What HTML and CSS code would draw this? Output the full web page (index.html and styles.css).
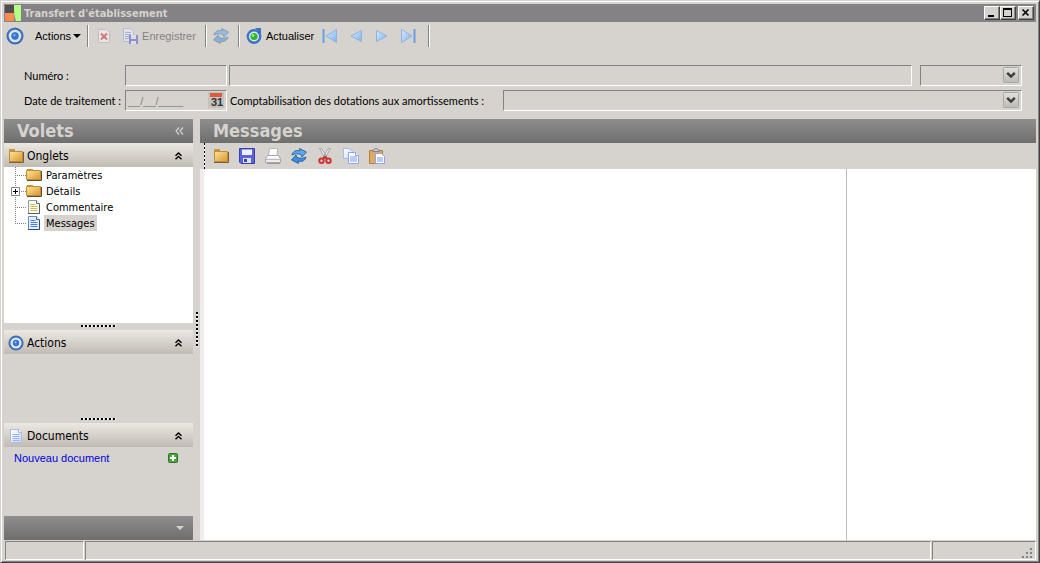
FILE: index.html
```html
<!DOCTYPE html>
<html lang="fr">
<head>
    <meta charset="UTF-8">
    <meta name="viewport" content="width=device-width, initial-scale=1.0">
    <title>Transfert d'établissement</title>
    <link rel="stylesheet" href="styles.css">
</head>
<body>

<!-- Shared icons -->
<svg class="sprite" width="0" height="0" aria-hidden="true">
    <defs>
        <linearGradient id="gold" x1="0" y1="0" x2="1" y2="1">
            <stop offset="0" stop-color="#fde69a"/>
            <stop offset="1" stop-color="#d9952f"/>
        </linearGradient>
        <linearGradient id="sky" x1="0" y1="0" x2="1" y2="1">
            <stop offset="0" stop-color="#d8eaff"/>
            <stop offset="1" stop-color="#7fb2ee"/>
        </linearGradient>
        <linearGradient id="paper" x1="0" y1="0" x2="1" y2="1">
            <stop offset="0" stop-color="#ffffff"/>
            <stop offset="1" stop-color="#c9d8fa"/>
        </linearGradient>
        <linearGradient id="knob" x1="0" y1="0" x2="0" y2="1">
            <stop offset="0" stop-color="#e2e1de"/>
            <stop offset="1" stop-color="#bcbab6"/>
        </linearGradient>
        <symbol id="target" viewBox="0 0 16 16">
            <circle cx="8" cy="8" r="6.600" fill="#d9e4f4" stroke="#3f6fb8" stroke-width="2"/>
            <circle cx="8" cy="8" r="2.800" fill="#2f7be0" stroke="#3a6cc0"/>
            <circle cx="7.400" cy="7.200" r="1" fill="#8cc4ff"/>
        </symbol>
        <symbol id="folder" viewBox="0 0 16 16">
            <path d="M1 4V1h6v3z" fill="#c8963c"/>
            <path d="M1.500 3.500h13v10h-13z" fill="url(#gold)" stroke="#c08c3a"/>
            <path d="M1 14.500h14.500V4" fill="none" stroke="#76603a"/>
        </symbol>
        <symbol id="tree-folder" viewBox="0 0 16 16">
            <path d="M1 4V2h6v2z" fill="#c8963c"/>
            <path d="M.5 3.500h14v9H.5z" fill="url(#gold)" stroke="#c08c3a"/>
            <path d="M1 13.500h14.500V4" fill="none" stroke="#5c4a28"/>
        </symbol>
        <symbol id="page" viewBox="0 0 16 16">
            <path d="M2.500 1.500h8l3 3v10h-11z" fill="url(#paper)" stroke="#a8bce8"/>
            <path d="M10.500 1.500v3h3" fill="#fff" stroke="#9fb4e4"/>
            <path d="M4.500 6.500h7M4.500 8.500h7M4.500 10.500h7M4.500 12.500h7" stroke="#9ab4f2"/>
        </symbol>
        <symbol id="sync" viewBox="0 0 16 16">
            <path d="M1 7C1.500 3.500 5 1.800 9 2.800L8.500.5 15.500 4 11 9 10 6.500C7 5.500 4 5.500 1 7z" fill="#58a8ec" stroke="#1d5596" stroke-width=".8"/>
            <path d="M15 9c-.5 3.500-4 5.200-8 4.200l.5 2.300L.5 12 5 7l1 2.500c3 1 6 1 9-.5z" fill="#3f90dc" stroke="#1d5596" stroke-width=".8"/>
        </symbol>
        <symbol id="collapse" viewBox="0 0 8 8">
            <path d="M1 3.800L4 1l3 2.800M1 7.300l3-2.800 3 2.800" fill="none" stroke="#000" stroke-width="1.400"/>
        </symbol>
        <symbol id="drop" viewBox="0 0 16 16">
            <rect x=".5" y=".5" width="15" height="15" rx="1" fill="url(#knob)" stroke="#aaa8a4"/>
            <path d="M4.200 5.800L8 9.600l3.800-3.800" fill="none" stroke="#3c3c3c" stroke-width="2.400"/>
        </symbol>
    </defs>
</svg>

<div class="window">
    <header class="titlebar">
        <svg class="logo" viewBox="0 0 16 16" aria-hidden="true">
            <path d="M0 0h9v8H0z" fill="#4e4e4c"/>
            <path d="M0 8h9v8H0z" fill="#ff8a50"/>
            <path d="M9 0h7v16h-5C9 11 9 6 9 0z" fill="#b4ff84"/>
        </svg>
        <h1 class="title">Transfert d'établissement</h1>
        <button class="caption-button" type="button" aria-label="Réduire">
            <svg viewBox="0 0 12 10"><path d="M2 7h6v2H2z"/></svg>
        </button>
        <button class="caption-button" type="button" aria-label="Agrandir">
            <svg viewBox="0 0 12 10"><path d="M1 0h9v9H1zM2 2v6h7V2z" fill-rule="evenodd"/></svg>
        </button>
        <button class="caption-button close" type="button" aria-label="Fermer">
            <svg viewBox="0 0 12 10"><path d="M2.500 1.500l6 6M8.500 1.500l-6 6" stroke="#000" stroke-width="1.600"/></svg>
        </button>
    </header>

    <nav class="toolbar" aria-label="Barre d'outils">
        <button class="tool" type="button" aria-label="Processus"><svg class="icon large"><use href="#target"/></svg></button>
        <button class="tool menu" type="button">Actions
            <svg class="caret" viewBox="0 0 8 4"><path d="M0 0h8L4 4z"/></svg>
        </button>
        <span class="separator"></span>
        <button class="tool" type="button" disabled aria-label="Supprimer">
            <svg class="icon" viewBox="0 0 16 16">
                <path d="M2.500 1.500h8l3 3v10h-11z" fill="#fbf8f8" stroke="#b0aec0"/>
                <path d="M5 5.500l6 6M11 5.500l-6 6" stroke="#d81c30" stroke-width="2"/>
            </svg>
        </button>
        <button class="tool" type="button" disabled>
            <svg class="icon" viewBox="0 0 16 16">
                <path d="M1.500.5h7l3 3v10h-10z" fill="#eef2ff" stroke="#8fa2e0"/>
                <path d="M3 4.500h6M3 6.500h6M3 8.500h5M3 10.500h4" stroke="#7b94e4"/>
                <path d="M7 7h9v9H7z" fill="#4a50c8"/>
                <path d="M9 7h5v4H9zM9 13h5v3H9z" fill="#e6e8ff"/>
            </svg>
            <span>Enregistrer</span>
        </button>
        <span class="separator wide"></span>
        <button class="tool" type="button" disabled aria-label="Synchroniser"><svg class="icon"><use href="#sync"/></svg></button>
        <span class="separator wide"></span>
        <button class="tool" type="button">
            <svg class="icon" viewBox="0 0 16 16">
                <circle cx="8" cy="8.500" r="6.200" fill="#dfe8f6" stroke="#3f72c0" stroke-width="2.400"/>
                <path d="M9 0h6v6z" fill="#3f72c0"/>
                <circle cx="8" cy="8.500" r="3.600" fill="#2fb52f"/>
                <circle cx="7" cy="7.500" r="1.400" fill="#8af07a"/>
            </svg>
            <span>Actualiser</span>
        </button>
        <div class="pager">
            <button class="tool" type="button" aria-label="Premier"><svg class="icon" viewBox="0 0 16 16"><path d="M14.500 1.500v13L4 8z" fill="url(#sky)" stroke="#8fb2de"/><path d="M1.500 1v14" stroke="#6d9edb" stroke-width="2"/></svg></button>
            <button class="tool" type="button" aria-label="Précédent"><svg class="icon" viewBox="0 0 16 16"><path d="M13.500 2.500v11L3 8z" fill="url(#sky)" stroke="#8fb2de"/></svg></button>
            <button class="tool" type="button" aria-label="Suivant"><svg class="icon" viewBox="0 0 16 16"><path d="M2.500 2.500v11L13 8z" fill="url(#sky)" stroke="#8fb2de"/></svg></button>
            <button class="tool" type="button" aria-label="Dernier"><svg class="icon" viewBox="0 0 16 16"><path d="M1.500 1.500v13L12 8z" fill="url(#sky)" stroke="#8fb2de"/><path d="M14.500 1v14" stroke="#6d9edb" stroke-width="2"/></svg></button>
        </div>
        <span class="separator"></span>
    </nav>

    <form class="criteria">
        <div class="row">
            <label class="caption" for="numero">Numéro :</label>
            <input class="field short" id="numero" type="text">
            <input class="field wide" type="text" aria-label="Libellé">
            <span class="combo small">
                <select class="field" aria-label="État"><option></option></select>
                <svg class="arrow"><use href="#drop"/></svg>
            </span>
        </div>
        <div class="row">
            <label class="caption" for="dateTraitement">Date de traitement :</label>
            <span class="date">
                <input class="field short" id="dateTraitement" type="text" value="__/__/____">
                <button class="calendar" type="button" aria-label="Calendrier">
                    <svg viewBox="0 0 16 16">
                        <rect width="16" height="16" rx="1" fill="#c4c2c0"/>
                        <path d="M2 1h12v4H2z" fill="#e2593c"/>
                        <text x="9" y="14" text-anchor="middle" fill="#333">31</text>
                    </svg>
                </button>
            </span>
            <label class="inline-label" for="comptabilisation">Comptabilisation des dotations aux amortissements :</label>
            <span class="combo">
                <select class="field" id="comptabilisation"><option></option></select>
                <svg class="arrow"><use href="#drop"/></svg>
            </span>
        </div>
    </form>

    <div class="workspace">
        <aside class="sidebar">
            <div class="pane-title">
                <h2>Volets</h2>
                <button class="plain" type="button" aria-label="Replier les volets">
                    <svg class="chevrons" viewBox="0 0 9 8"><path d="M4 .5L1 4l3 3.500M8 .5L5 4l3 3.500" fill="none" stroke="#d6d3ce" stroke-width="1.200"/></svg>
                </button>
            </div>

            <section class="panel tabs">
                <div class="panel-title">
                    <svg class="icon"><use href="#folder"/></svg>
                    <h3>Onglets</h3>
                    <button class="plain" type="button" aria-label="Replier Onglets"><svg class="chevrons"><use href="#collapse"/></svg></button>
                </div>
                <ul class="tree">
                    <li><span class="branch"></span><svg class="icon"><use href="#tree-folder"/></svg><a href="#">Paramètres</a></li>
                    <li>
                        <span class="branch"><button class="expander" type="button" aria-label="Développer Détails"><svg viewBox="0 0 9 9"><path d="M.5.5h8v8h-8z" fill="#fff" stroke="#848284"/><path d="M2 4.500h5M4.500 2v5" stroke="#000"/></svg></button></span>
                        <svg class="icon"><use href="#tree-folder"/></svg><a href="#">Détails</a>
                    </li>
                    <li>
                        <span class="branch"></span>
                        <svg class="icon" viewBox="0 0 16 16"><path d="M2.500 1.500h8l3 3v10h-11z" fill="#fffce0" stroke="#8c9cac"/><path d="M10.500 1.500v3h3" fill="#fff" stroke="#54708c"/><path d="M4.500 5.500h5M4.500 7.500h7M4.500 9.500h7M4.500 11.500h7" stroke="#c4bc7c"/><path d="M2 14.500h11.500V5" fill="none" stroke="#4c5c6c"/></svg>
                        <a href="#">Commentaire</a>
                    </li>
                    <li class="last">
                        <span class="branch"></span>
                        <svg class="icon" viewBox="0 0 16 16"><path d="M2.500 1.500h8l3 3v10h-11z" fill="#e8f0ff" stroke="#6c8cc4"/><path d="M10.500 1.500v3h3" fill="#fff" stroke="#3c64a4"/><path d="M4.500 5.500h5M4.500 7.500h7M4.500 9.500h7M4.500 11.500h7" stroke="#4c7cdc"/><path d="M2 14.500h11.500V5" fill="none" stroke="#2c4c84"/></svg>
                        <a class="selected" href="#" aria-current="page">Messages</a>
                    </li>
                </ul>
            </section>
            <div class="grip"></div>

            <section class="panel actions">
                <div class="panel-title">
                    <svg class="icon"><use href="#target"/></svg>
                    <h3>Actions</h3>
                    <button class="plain" type="button" aria-label="Replier Actions"><svg class="chevrons"><use href="#collapse"/></svg></button>
                </div>
            </section>
            <div class="grip"></div>

            <section class="panel documents">
                <div class="panel-title">
                    <svg class="icon"><use href="#page"/></svg>
                    <h3>Documents</h3>
                    <button class="plain" type="button" aria-label="Replier Documents"><svg class="chevrons"><use href="#collapse"/></svg></button>
                </div>
                <div class="new-document">
                    <a href="#">Nouveau document</a>
                    <button class="plain" type="button" aria-label="Ajouter">
                        <svg class="add" viewBox="0 0 10 10"><rect x=".5" y=".5" width="9" height="9" rx="1" fill="#4ca43e" stroke="#2c7622"/><path d="M5 2v6M2 5h6" stroke="#fff" stroke-width="2"/></svg>
                    </button>
                </div>
            </section>

            <div class="pane-title footer">
                <button class="plain" type="button" aria-label="Options">
                    <svg class="caret" viewBox="0 0 8 4"><path d="M0 0h8L4 4z" fill="#d6d3ce"/></svg>
                </button>
            </div>
        </aside>

        <div class="splitter"></div>

        <main class="content">
            <div class="pane-title">
                <h2>Messages</h2>
            </div>
            <div class="content-tools">
                <button class="tool" type="button" aria-label="Ouvrir"><svg class="icon"><use href="#folder"/></svg></button>
                <button class="tool" type="button" aria-label="Enregistrer">
                    <svg class="icon" viewBox="0 0 16 16"><path d="M.5.5h15v15H2L.5 14z" fill="#5c62dc" stroke="#3a3eac"/><path d="M3 1h10v6H3z" fill="#eef0ff"/><path d="M3 1h10v1H3z" fill="#9fa5f4"/><path d="M4 10h8v5H4z" fill="#dfe2f6"/><path d="M5 11h3v3H5z" fill="#3a3fb4"/></svg>
                </button>
                <button class="tool" type="button" aria-label="Imprimer">
                    <svg class="icon" viewBox="0 0 16 16"><path d="M4.500.5h8L12 8H3.500z" fill="#fff" stroke="#b8b8b8"/><path d="M2.500 7.500h11l2 3v4H.5v-4z" fill="#ececee" stroke="#a8a8ac"/><path d="M3 8h10v2H3z" fill="#fff"/><path d="M1 11.500h14" stroke="#bcbcc0"/><path d="M2 15.500h13" stroke="#98989c"/></svg>
                </button>
                <button class="tool" type="button" aria-label="Actualiser"><svg class="icon"><use href="#sync"/></svg></button>
                <button class="tool" type="button" aria-label="Couper">
                    <svg class="icon" viewBox="0 0 16 16"><path d="M2.500 0h1.500l5.500 8L8 10.500zM13.500 0H12L6.500 8 8 10.500z" fill="#fff" stroke="#8c8c94" stroke-width=".8"/><path d="M8 8.500l-2.500 3M8 8.500l2.500 3" stroke="#c83030" stroke-width="2"/><circle cx="4.500" cy="12.800" r="2.200" fill="#ead6d4" stroke="#cc3434" stroke-width="2"/><circle cx="11.500" cy="12.800" r="2.200" fill="#ead6d4" stroke="#cc3434" stroke-width="2"/></svg>
                </button>
                <button class="tool" type="button" aria-label="Copier">
                    <svg class="icon" viewBox="0 0 16 16"><path d="M.5.5h6l3 3v7h-9z" fill="url(#paper)" stroke="#a4b8ec"/><path d="M5.500 4.500h7l3 3v8h-10z" fill="#fff" stroke="#8ca6e6"/><path d="M7 8h7v6H7z" fill="#b8ccfa"/><path d="M12.500 4.500v3h3" fill="#fff" stroke="#8ca6e6"/></svg>
                </button>
                <button class="tool" type="button" aria-label="Coller">
                    <svg class="icon" viewBox="0 0 16 16"><path d="M.5 2.500h13v13H.5z" fill="#e0a862" stroke="#b08040"/><path d="M3.500 3.500V2H5L6 .5h2L9 2h1.500v1.500z" fill="#c8c8c8" stroke="#888"/><path d="M6.500 5.500h6l3 3v7h-9z" fill="#fff" stroke="#8ca6e6"/><path d="M8 9h6v5H8z" fill="#b8ccfa"/></svg>
                </button>
            </div>
            <div class="messages">
                <div class="message-list"></div>
                <div class="message-side"></div>
            </div>
        </main>
    </div>

    <footer class="statusbar">
        <span class="cell first"></span>
        <span class="cell middle"></span>
        <span class="cell end">
            <svg class="resize" viewBox="0 0 11 11"><path d="M8 0h2v2H8zM4 4h2v2H4zM8 4h2v2H8zM0 8h2v2H0zM4 8h2v2H4zM8 8h2v2H8z" fill="#848284"/></svg>
        </span>
    </footer>
</div>

</body>
</html>
```
FILE: styles.css
```css
* {
    box-sizing: border-box;
}

body {
    margin: 0;
    background-color: #d6d3ce;
    color: #000;
    font-family: "Liberation Sans", Arial, sans-serif;
    font-size: 11px;
}

h1, h2, h3, ul {
    margin: 0;
    padding: 0;
}

button, input, select {
    font: inherit;
    color: inherit;
}

svg {
    display: block;
    flex: none;
}

.sprite {
    height: 0;
}

.window {
    display: flex;
    flex-direction: column;
    min-height: 100vh;
    padding: 3px 3px 2px;
    border: 1px solid #d6d3ce;
    border-right-color: #424142;
    border-bottom-color: #424142;
    box-shadow: inset 1px 1px #fff, inset -1px -1px #848284;
}

/* Title bar */
.titlebar {
    display: flex;
    align-items: center;
    height: 18px;
    padding-right: 2px;
    background-color: #848284;
}

.logo {
    width: 16px;
    height: 16px;
    margin: 0 3px 0 1px;
}

.title {
    flex: 1;
    color: #d6d3ce;
    font-family: "DejaVu Sans Condensed", "DejaVu Sans", sans-serif;
    font-size: 11px;
    font-weight: bold;
}

.caption-button {
    width: 16px;
    height: 14px;
    padding: 1px;
    border: 1px solid #fff;
    border-right-color: #424142;
    border-bottom-color: #424142;
    background-color: #d6d3ce;
    box-shadow: inset -1px -1px #848284;
}

.caption-button svg {
    width: 12px;
    height: 10px;
}

.caption-button.close {
    margin-left: 2px;
}

/* Toolbars */
.toolbar {
    display: flex;
    align-items: center;
    height: 28px;
    padding-left: 2px;
}

.tool {
    display: flex;
    align-items: center;
    gap: 4px;
    padding: 0;
    border: none;
    background: none;
    cursor: pointer;
}

.tool:disabled {
    color: #848284;
    cursor: default;
}

.tool:disabled svg {
    opacity: 0.5;
}

.tool.menu {
    margin-left: 11px;
    gap: 2px;
}

.icon {
    width: 16px;
    height: 16px;
}

.icon.large {
    width: 18px;
    height: 18px;
}

.caret {
    width: 8px;
    height: 4px;
}

.separator {
    width: 2px;
    height: 22px;
    margin: 0 7px 0 6px;
    border-left: 1px solid #848284;
    border-right: 1px solid #fff;
}

.separator.wide {
    margin: 0 6px 0 9px;
}

.toolbar .tool:disabled + .tool {
    margin-left: 10px;
}

.pager {
    display: flex;
    gap: 10px;
    margin: 0 6px 0 8px;
}

/* Criteria */
.criteria {
    display: flex;
    flex-direction: column;
    gap: 4px;
    padding: 15px 14px 8px 20px;
}

.row {
    display: flex;
    align-items: center;
    gap: 2px;
}

.caption,
.inline-label {
    font-family: Lato, "Liberation Sans", sans-serif;
    white-space: nowrap;
}

.caption {
    width: 99px;
}

.field {
    width: 100%;
    height: 21px;
    padding: 0 2px;
    border: 1px solid #848284;
    border-right-color: #fff;
    border-bottom-color: #fff;
    border-radius: 0;
    background-color: #d6d3ce;
    appearance: none;
}

.field.short {
    width: 102px;
    color: #848284;
}

.field.wide {
    flex: 1;
}

.combo {
    position: relative;
    flex: 1;
}

.combo.small {
    flex: none;
    width: 102px;
    margin-left: 6px;
}

.combo .field {
    display: block;
}

.arrow {
    position: absolute;
    top: 2px;
    right: 3px;
    width: 16px;
    height: 16px;
    pointer-events: none;
}

.date {
    position: relative;
}

.date .field {
    display: block;
}

.calendar {
    position: absolute;
    top: 2px;
    right: 3px;
    padding: 0;
    border: none;
    background: none;
}

.calendar svg {
    width: 16px;
    height: 16px;
    font-size: 11px;
    font-weight: bold;
}

.inline-label {
    width: 272px;
    padding-left: 1px;
}

/* Workspace */
.workspace {
    display: flex;
    flex: 1;
}

.sidebar {
    display: flex;
    flex-direction: column;
    width: 189px;
}

.pane-title {
    display: flex;
    align-items: center;
    justify-content: space-between;
    height: 24px;
    padding: 0 9px 0 13px;
    background: linear-gradient(#8e8e8e, #6e6e6e);
    color: #d6d3ce;
}

.pane-title h2 {
    font-family: "DejaVu Sans Condensed", "DejaVu Sans", sans-serif;
    font-size: 18px;
    line-height: 24px;
}

.pane-title.footer {
    justify-content: flex-end;
    margin-top: auto;
}

.plain {
    padding: 0;
    border: none;
    background: none;
    cursor: pointer;
}

.chevrons {
    width: 9px;
    height: 8px;
}

.panel-title {
    display: flex;
    align-items: center;
    gap: 3px;
    height: 24px;
    padding: 1px 10px 0 4px;
    background: linear-gradient(#ece8e2, #c0bcb4);
}

.panel-title h3 {
    flex: 1;
    font-family: "DejaVu Sans Condensed", "DejaVu Sans", sans-serif;
    font-size: 12px;
    font-weight: normal;
}

.tabs {
    display: flex;
    flex: 1;
    flex-direction: column;
}

.tree {
    flex: 1;
    background-color: #fff;
    list-style: none;
    font-family: "DejaVu Sans Condensed", "DejaVu Sans", sans-serif;
}

.tree li {
    display: flex;
    align-items: center;
    height: 16px;
}

.tree a {
    margin-left: 2px;
    padding: 1px 2px 0;
    color: #000;
    line-height: 15px;
    text-decoration: none;
}

.tree a.selected {
    background-color: #d6d3ce;
}

/* Dotted lines that join the tree items */
.branch {
    display: flex;
    align-items: center;
    align-self: stretch;
    width: 22px;
    padding-left: 7px;
    background:
        repeating-linear-gradient(#848284 0 1px, transparent 1px 2px) 11px 0 / 1px 100% no-repeat,
        repeating-linear-gradient(90deg, #848284 0 1px, transparent 1px 2px) 11px 8px / 11px 1px no-repeat;
}

.last .branch {
    background-size: 1px 8px, 11px 1px;
}

.expander {
    padding: 0;
    border: none;
    background: none;
}

.expander svg {
    width: 9px;
    height: 9px;
}

.grip {
    height: 7px;
    background: repeating-linear-gradient(90deg, #000 0 2px, #fff 2px 3px, transparent 3px 4px) center 2px / 36px 2px no-repeat;
}

.actions {
    height: 86px;
}

.documents {
    height: 93px;
}

.new-document {
    display: flex;
    align-items: center;
    justify-content: space-between;
    height: 22px;
    padding: 0 15px 0 10px;
}

.new-document a {
    color: #0000e0;
    text-decoration: none;
}

.add {
    width: 10px;
    height: 10px;
}

.splitter {
    width: 7px;
    background: repeating-linear-gradient(#000 0 2px, #fff 2px 3px, transparent 3px 4px) 3px center / 2px 36px no-repeat;
    cursor: col-resize;
}

.content {
    display: flex;
    flex: 1;
    flex-direction: column;
}

.content-tools {
    display: flex;
    align-items: center;
    gap: 10px;
    height: 26px;
    margin-left: 4px;
    padding-left: 9px;
    background: repeating-linear-gradient(#000 0 2px, #fff 2px 4px) 0 0 / 1px 100% no-repeat;
}

.messages {
    display: flex;
    flex: 1;
    border-left: 4px solid #efebef;
    background-color: #fff;
}

.message-list {
    flex: 1;
    border-right: 1px solid #bdbabd;
}

.message-side {
    width: 189px;
}

/* Status bar */
.statusbar {
    display: flex;
    gap: 1px;
    height: 19px;
    margin-top: 1px;
    padding-left: 1px;
}

.cell {
    border: 1px solid #848284;
    border-right-color: #fff;
    border-bottom-color: #fff;
}

.cell.first {
    width: 79px;
}

.cell.middle {
    flex: 1;
}

.cell.end {
    display: flex;
    align-items: flex-end;
    justify-content: flex-end;
    width: 104px;
    padding: 0 2px;
}

.resize {
    width: 11px;
    height: 11px;
}
```
